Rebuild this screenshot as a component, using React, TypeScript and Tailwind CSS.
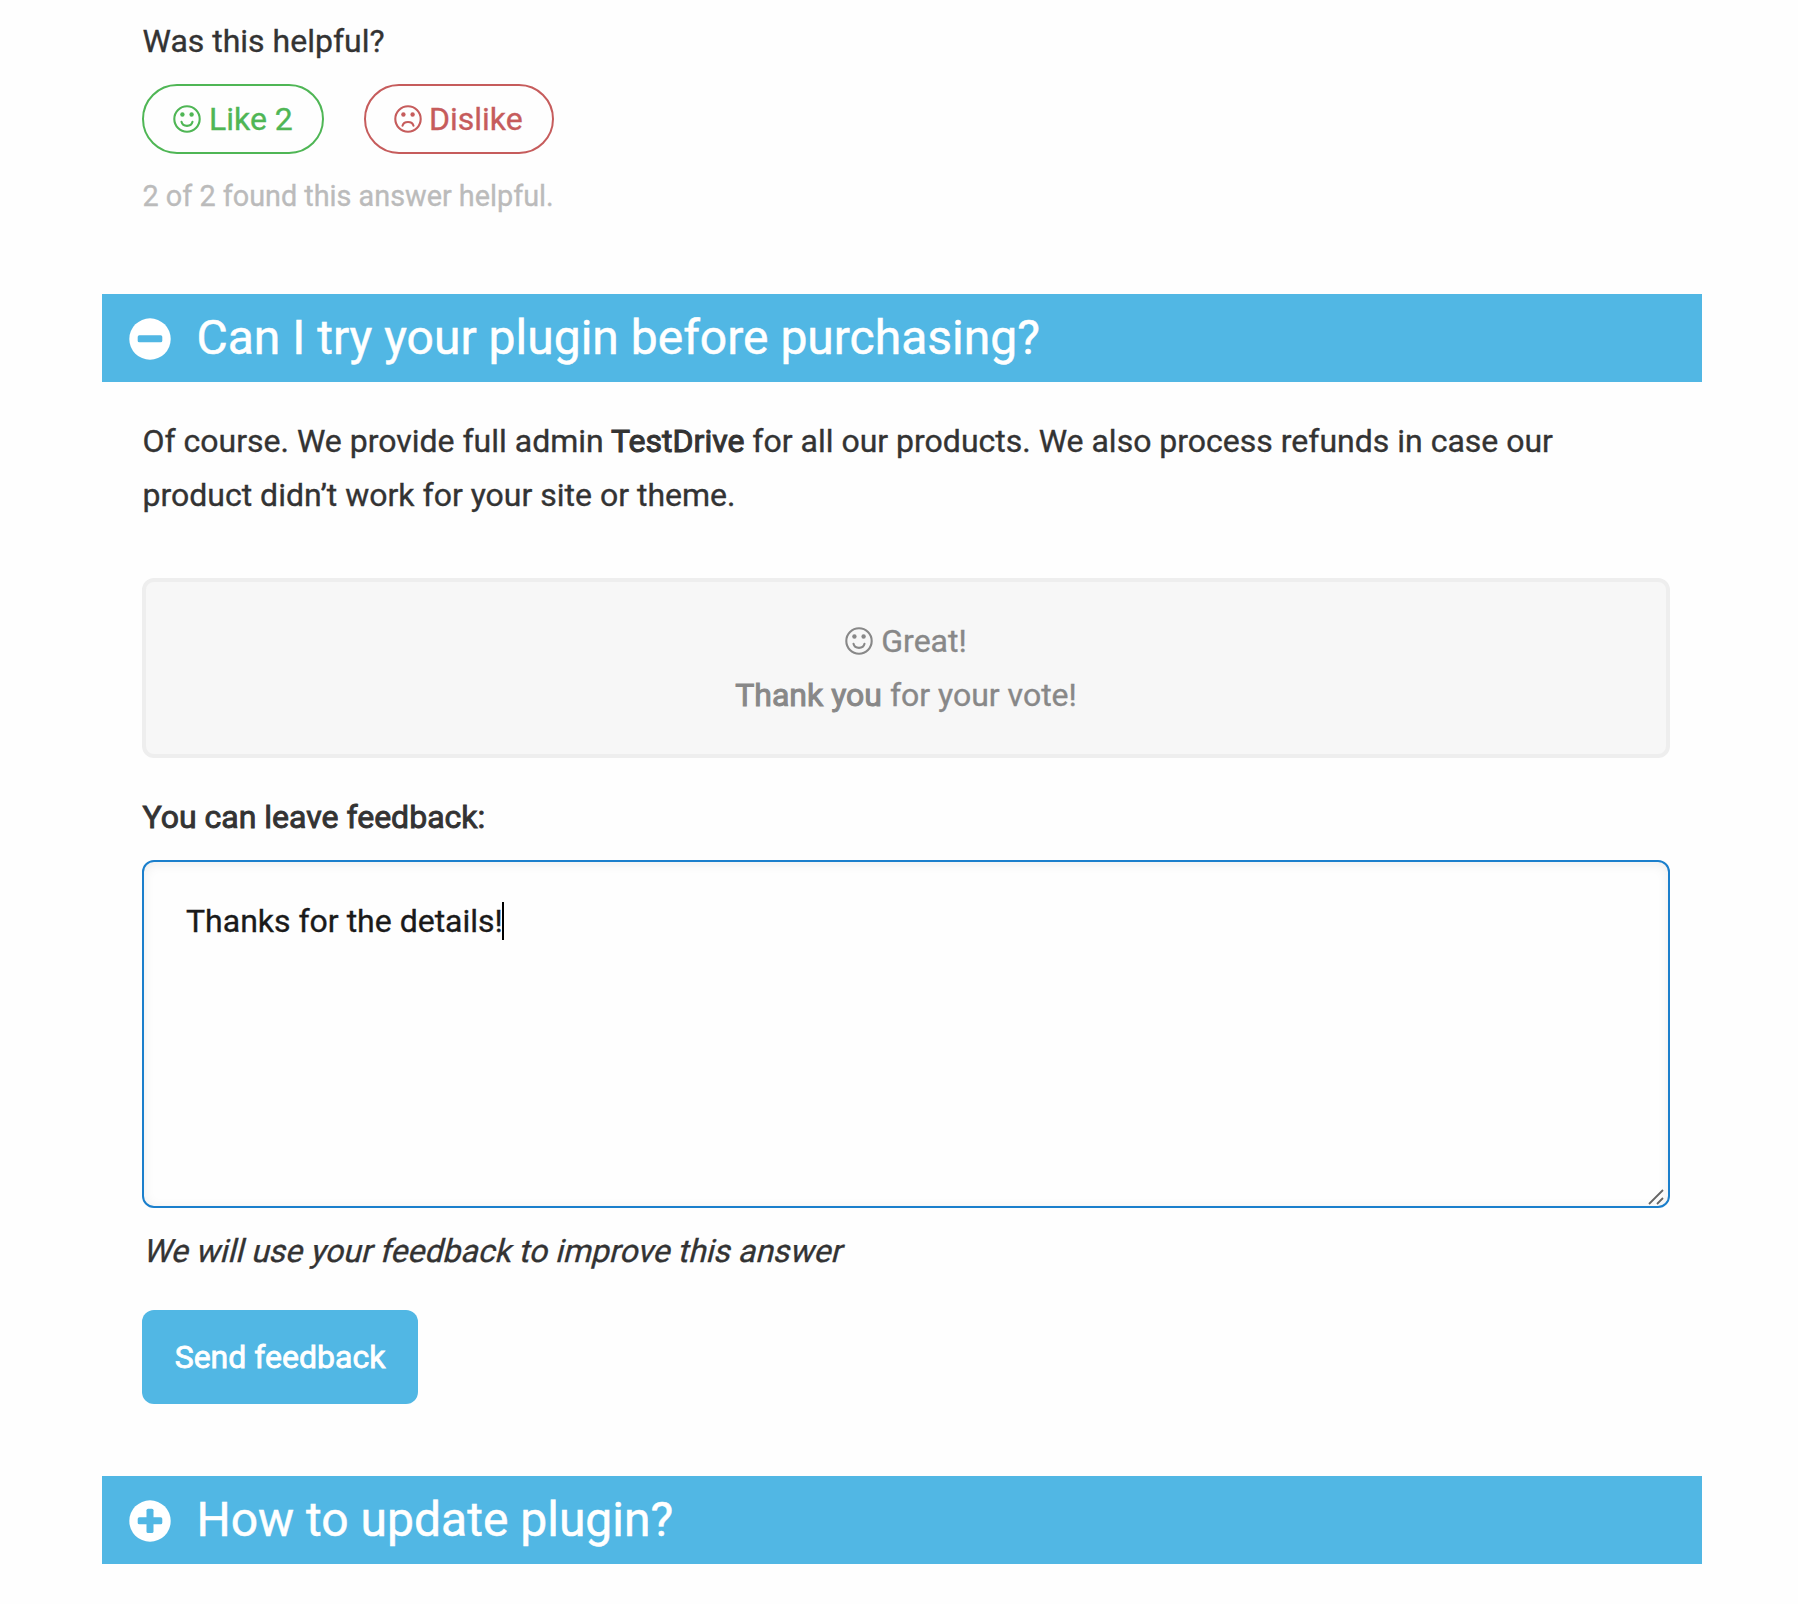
import React from "react";

function Face({ sad = false, className = "" }: { sad?: boolean; className?: string }) {
  return (
    <svg viewBox="-14 -14 28 28" className={`h-7 w-7 shrink-0 ${className}`} fill="none" stroke="currentColor">
      <circle r="12.7" strokeWidth="2.1" />
      <circle cx="-4.6" cy="-4.5" r="2.2" fill="currentColor" stroke="none" />
      <circle cx="4.6" cy="-4.5" r="2.2" fill="currentColor" stroke="none" />
      <path
        d={sad ? "M-5.5 6.7C-4.2 1.8 4.2 1.8 5.5 6.7" : "M-5.5 2.8C-4.2 8.2 4.2 8.2 5.5 2.8"}
        strokeWidth="2.1"
        strokeLinecap="round"
      />
    </svg>
  );
}

function SectionHeader({ title, open }: { title: string; open: boolean }) {
  return (
    <div className="flex h-[88px] w-[1600px] items-center bg-[#51b7e4] pl-[27px] text-white">
      <svg viewBox="0 0 42 42" className="mt-[2px] h-[42px] w-[42px] shrink-0">
        <circle cx="21" cy="21" r="20.7" fill="currentColor" />
        <rect x="8.7" y="17.3" width="24.6" height="7" rx="1.6" className="fill-[#51b7e4]" />
        {!open && <rect x="17.5" y="8.7" width="7" height="24.4" rx="1.6" className="fill-[#51b7e4]" />}
      </svg>
      <h2 className="ml-[25.5px] text-[48px] leading-[88px] whitespace-nowrap [-webkit-text-stroke:0.5px_currentColor]">{title}</h2>
    </div>
  );
}

export default function App() {
  return (
    <main className="h-[1604px] w-[1798px] overflow-hidden bg-[#fefefe] pl-[102px] font-['Roboto',sans-serif] text-[32px] leading-[54px] text-[#333] [-webkit-text-stroke:0.35px_currentColor]">
      <section className="h-[294px] pl-10 pt-[14px]">
        <p className="pl-[0.5px]">Was this helpful?</p>
        <div className="mt-4 flex gap-10">
          <button className="flex h-[70px] w-[182px] items-center rounded-full border-2 border-[#4fb655] pl-[29px] text-[#4fb655]">
            <Face />
            <span className="ml-2 whitespace-nowrap">Like 2</span>
          </button>
          <button className="flex h-[70px] w-[190px] items-center rounded-full border-2 border-[#c65c5c] pl-[28px] text-[#c65c5c]">
            <Face sad />
            <span className="ml-[7px] whitespace-nowrap">Dislike</span>
          </button>
        </div>
        <p className="mt-[15px] pl-[0.5px] text-[28.8px] text-[#bbb]">2 of 2 found this answer helpful.</p>
      </section>

      <SectionHeader title="Can I try your plugin before purchasing?" open />

      <section className="h-[1094px] w-[1568px] pl-10 pt-[32px]">
        <p className="pl-[0.5px] whitespace-nowrap">
          Of course. We provide full admin <span className="[-webkit-text-stroke:1px_currentColor]">TestDrive</span> for all our products. We also process refunds in case our
          <br />
          product didn’t work for your site or theme.
        </p>
        <div className="mt-14 h-[180px] rounded-xl border-4 border-[#eee] bg-[#f7f7f7] pt-8 text-center text-[#888]">
          <p className="flex items-center justify-center">
            <Face />
            <span className="ml-2">Great!</span>
          </p>
          <p>
            <span className="[-webkit-text-stroke:1px_currentColor]">Thank you</span> for your vote!
          </p>
        </div>
        <p className="mt-8 pl-[0.5px] [-webkit-text-stroke:0.9px_currentColor]">You can leave feedback:</p>
        <div className="relative mt-4 flex h-[348px] items-start rounded-xl border-2 border-[#1b7fcc] bg-[#fefefe] pl-[42px] pt-8 text-[#1a1a1a] shadow-[inset_0_2px_12px_rgba(0,0,0,0.07)]">
          <span>Thanks for the details!</span>
          <span className="mt-[8px] -ml-px h-[38px] w-[2px] bg-black" />
          <svg viewBox="0 0 16 16" className="absolute right-[4px] bottom-[1px] h-4 w-4" stroke="#666" strokeWidth="1.8">
            <path d="M1 15L15 1M9 15L15 9" />
          </svg>
        </div>
        <p className="mt-4">
          <span className="inline-block origin-[0_38px] -skew-x-[14deg] pl-[0.5px] align-top">We will use your feedback to improve this answer</span>
        </p>
        <button className="mt-8 flex h-[94px] w-[276px] items-center justify-center rounded-xl bg-[#51b7e4] whitespace-nowrap text-white [-webkit-text-stroke:0.8px_currentColor]">
          Send feedback
        </button>
      </section>

      <SectionHeader title="How to update plugin?" open={false} />
    </main>
  );
}
